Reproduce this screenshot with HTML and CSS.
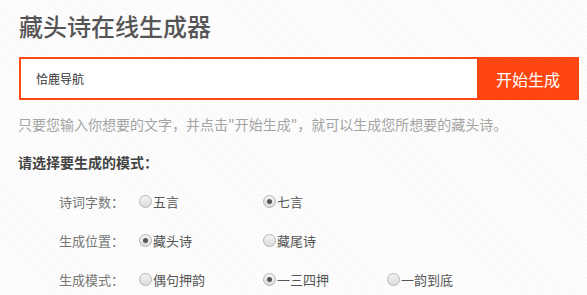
FILE: index.html
```html
<!DOCTYPE html>
<html>
<head>
  <meta charset="utf-8">
  <title>藏头诗在线生成器</title>
  <link rel="stylesheet" href="styles.css">
</head>
<body>
  <div class="wrap">
    <h1 class="title">藏头诗在线生成器</h1>

    <div class="searchbar">
      <div class="inputbox">恰鹿导航</div>
      <button class="gobutton">开始生成</button>
    </div>

    <p class="tip">只要您输入你想要的文字，并点击"开始生成"，就可以生成您所想要的藏头诗。</p>

    <p class="subhead">请选择要生成的模式：</p>

    <div class="optrow">
      <span class="label">诗词字数：</span>
      <span class="opt"><i class="radio"></i>五言</span>
      <span class="opt"><i class="radio on"></i>七言</span>
    </div>
    <div class="optrow">
      <span class="label">生成位置：</span>
      <span class="opt"><i class="radio on"></i>藏头诗</span>
      <span class="opt"><i class="radio"></i>藏尾诗</span>
    </div>
    <div class="optrow">
      <span class="label">生成模式：</span>
      <span class="opt"><i class="radio"></i>偶句押韵</span>
      <span class="opt"><i class="radio on"></i>一三四押</span>
      <span class="opt"><i class="radio"></i>一韵到底</span>
    </div>
  </div>
</body>
</html>
```

FILE: styles.css
```css
body{
 margin: 0;
 font-family: "Noto Sans CJK SC", "Noto Sans", sans-serif;
 color: #444;
 background-color: #fbfbfb;
 background-image: repeating-linear-gradient(45deg, #fdfdfd 0px, #fdfdfd 2px, #f8f8f8 2px, #f8f8f8 3px);
}
.wrap{
 padding-left: 19px;
 width: 560px;
}
.title{
 margin: 11px 0 0 0;
 font-size: 24px;
 line-height: 30px;
 font-weight: 500;
 color: #555;
}
.searchbar{
 display: flex;
 height: 43px;
 margin-top: 16px;
}
.inputbox{
 flex: 1;
 border: 2px solid #ff4814;
 border-right: none;
 background-color: #fff;
 font-size: 12px;
 color: #333;
 line-height: 39px;
 padding-left: 15px;
}
.gobutton{
 width: 102px;
 border: none;
 background-color: #ff4610;
 color: #fff;
 font-family: inherit;
 font-size: 16px;
 padding: 0;
}
.tip{
 margin: 14px 0 0 -1px;
 font-size: 14px;
 line-height: 20px;
 color: #a4a4a4;
}
.subhead{
 margin: 18px 0 0 -1px;
 font-size: 14px;
 line-height: 20px;
 font-weight: bold;
 color: #444;
}
.optrow{
 display: flex;
 align-items: center;
 height: 20px;
 margin-top: 19px;
 padding-left: 40px;
 font-size: 13px;
}
.optrow:first-of-type{
 margin-top: 24px;
}
.label{
 width: 80px;
 color: #777;
}
.opt{
 width: 124px;
 display: flex;
 align-items: center;
 color: #555;
}
.radio{
 width: 11px;
 height: 11px;
 border: 1px solid #b4b4b4;
 border-radius: 50%;
 background: linear-gradient(#f4f4f4, #dcdcdc);
 display: flex;
 align-items: center;
 justify-content: center;
 margin-right: 1px;
}
.radio.on::after{
 content: "";
 width: 5px;
 height: 5px;
 border-radius: 50%;
 background-color: #555;
}
```
